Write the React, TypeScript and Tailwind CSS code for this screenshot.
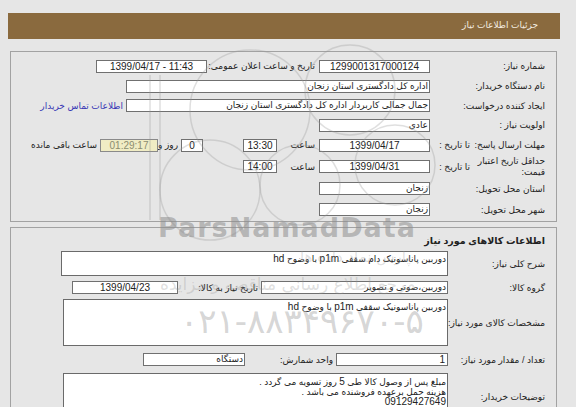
import React from "react";

const F = "font-['Liberation_Sans','DejaVu_Sans',sans-serif]";

function Inp({
  className,
  children,
  ltr,
}: {
  className: string;
  children?: React.ReactNode;
  ltr?: boolean;
}) {
  return (
    <div
      dir={ltr ? "ltr" : "rtl"}
      className={`h-[13px] shrink-0 border border-[#707070] bg-white leading-[11px] text-[#222] whitespace-nowrap overflow-hidden ${
        ltr ? "text-[10px]" : "text-[9px]"
      } ${className}`}
    >
      {children}
    </div>
  );
}

function Lbl({ className, children }: { className: string; children: React.ReactNode }) {
  return (
    <div className={`shrink-0 text-[9px] leading-[12px] text-[#222] whitespace-nowrap ${className}`}>
      {children}
    </div>
  );
}

export default function App() {
  return (
    <div
      dir="rtl"
      className={`relative w-[576px] h-[407px] overflow-hidden bg-[#e6e6e6] pt-[13px] pl-[8px] pr-[16px] ${F}`}
    >
      {/* header */}
      <div className="h-[26px] bg-[#8a6a3e] flex items-center pr-[22px]">
        <span className="text-[9px] text-[#f3ece0]">جزئیات اطلاعات نیاز</span>
      </div>

      {/* panel 1 */}
      <div className="mt-[12px] ml-[2px] mr-[3px] h-[171px] border border-[#a2a2a2] pt-[4px] pr-[9px]">
        {/* row 1 */}
        <div className="flex items-center h-[20px]">
          <Lbl className="w-[117px] pr-[2px]">شماره نیاز:</Lbl>
          <Inp className="w-[111px] text-center" ltr>
            1299001317000124
          </Inp>
          <Lbl className="w-[112px] pr-[4px]">تاریخ و ساعت اعلان عمومی:</Lbl>
          <Inp className="w-[111px] text-center" ltr>
            1399/04/17 - 11:43
          </Inp>
        </div>
        {/* row 2 */}
        <div className="flex items-center h-[20px]">
          <Lbl className="w-[117px] pr-[2px]">نام دستگاه خریدار:</Lbl>
          <Inp className="w-[304px] pr-[1px]">اداره کل دادگستری استان زنجان</Inp>
        </div>
        {/* row 3 */}
        <div className="flex items-center h-[19px]">
          <Lbl className="w-[117px] pr-[2px]">ایجاد کننده درخواست:</Lbl>
          <Inp className="w-[304px] pr-[1px]">جمال جمالی کاربردار اداره کل دادگستری استان زنجان</Inp>
          <div className="pr-[3px] text-[9px] leading-[12px] text-[#3737b5] whitespace-nowrap">
            اطلاعات تماس خریدار
          </div>
        </div>
        {/* row 4 */}
        <div className="flex items-center h-[20px]">
          <Lbl className="w-[117px] pr-[2px]">اولویت نیاز :</Lbl>
          <Inp className="w-[111px] pr-[1px]">عادي</Inp>
        </div>
        {/* row 5 */}
        <div className="flex items-center h-[20px]">
          <div className="w-[117px] shrink-0 flex items-center pr-[2px]">
            <Lbl className="w-[75px]">مهلت ارسال پاسخ:</Lbl>
            <Lbl className="">تا تاریخ :</Lbl>
          </div>
          <Inp className="w-[111px] text-center" ltr>
            1399/04/17
          </Inp>
          <Lbl className="w-[42px] pr-[4px]">ساعت</Lbl>
          <Inp className="w-[34px] text-center" ltr>
            13:30
          </Inp>
          <div className="w-[40px] shrink-0" />
          <Inp className="w-[22px] text-center" ltr>
            0
          </Inp>
          <Lbl className="w-[23px] pr-[3px]">روز و</Lbl>
          <div
            dir="ltr"
            className="h-[13px] w-[58px] shrink-0 border border-[#8a8a8a] bg-[#f0ecc4] text-[10px] leading-[11px] text-[#8c8c70] text-center"
          >
            01:29:17
          </div>
          <Lbl className="pr-[3px]">ساعت باقی مانده</Lbl>
        </div>
        {/* row 6 */}
        <div className="flex items-center h-[23px]">
          <div className="w-[117px] shrink-0 flex items-center pr-[2px]">
            <div className="w-[75px] shrink-0 text-[9px] leading-[11px] text-[#222] whitespace-nowrap">
              حداقل تاریخ اعتبار
              <br />
              قیمت:
            </div>
            <Lbl className="">تا تاریخ :</Lbl>
          </div>
          <Inp className="w-[111px] text-center" ltr>
            1399/04/31
          </Inp>
          <Lbl className="w-[42px] pr-[4px]">ساعت</Lbl>
          <Inp className="w-[34px] text-center" ltr>
            14:00
          </Inp>
        </div>
        {/* row 7 */}
        <div className="flex items-center h-[21px]">
          <Lbl className="w-[117px] pr-[2px]">استان محل تحویل:</Lbl>
          <Inp className="w-[111px] pr-[1px]">زنجان</Inp>
        </div>
        {/* row 8 */}
        <div className="flex items-center h-[21px]">
          <Lbl className="w-[117px] pr-[2px]">شهر محل تحویل:</Lbl>
          <Inp className="w-[111px] pr-[1px]">زنجان</Inp>
        </div>
      </div>

      {/* panel 2 */}
      <div className="mt-[5px] ml-[2px] mr-[3px] h-[200px] border border-[#a2a2a2] pt-[3px] pr-[9px]">
        <div className="h-[20px] flex items-center pr-[2px]">
          <span className="text-[9.5px] font-bold text-[#222]">اطلاعات کالاهای مورد نیاز</span>
        </div>
        <div className="flex items-center">
          <Lbl className="w-[99px] pr-[2px]">شرح کلی نیاز:</Lbl>
          <div className="h-[25px] w-[387px] shrink-0 border border-[#6a6a6a] bg-white text-[9px] leading-[12px] text-[#222] pr-[1px] pt-[1px]">
            دوربین پاناسونیک دام  سقفی <span className="text-[10px]">p1m</span> با وضوح <span className="text-[10px]">hd</span>
          </div>
        </div>
        <div className="flex items-center h-[23px]">
          <Lbl className="w-[99px] pr-[2px]">گروه کالا:</Lbl>
          <Inp className="w-[187px] pr-[1px]">دوربین،صوتی و تصویر</Inp>
          <Lbl className="w-[83px] pr-[3px]">تاریخ نیاز به کالا:</Lbl>
          <Inp className="w-[106px] text-center" ltr>
            1399/04/23
          </Inp>
        </div>
        <div className="flex items-center">
          <Lbl className="w-[99px] pr-[2px]">مشخصات کالای مورد نیاز:</Lbl>
          <div className="h-[47px] w-[385px] shrink-0 border border-[#6a6a6a] bg-white text-[9px] leading-[12px] text-[#222] pr-[1px] pt-[1px]">
            دوربین پاناسونیک سقفی <span className="text-[10px]">p1m</span> با وضوح <span className="text-[10px]">hd</span>
          </div>
        </div>
        <div className="flex items-center h-[27px]">
          <Lbl className="w-[99px] pr-[2px]">تعداد / مقدار مورد نیاز:</Lbl>
          <Inp className="w-[112px] pr-[2px] text-[10px]">1</Inp>
          <Lbl className="w-[91px] pr-[3px]">واحد شمارش:</Lbl>
          <Inp className="w-[102px] pr-[1px]">دستگاه</Inp>
        </div>
        <div className="flex items-center">
          <Lbl className="w-[99px] pr-[2px]">توضیحات خریدار:</Lbl>
          <div className="h-[48px] w-[385px] shrink-0 border border-[#6a6a6a] bg-white text-[9px] leading-[10px] text-[#222] pr-[1px] pt-[3px]">
            <div>
              مبلغ پس از وصول کالا طی <span className="text-[10px]">5</span> روز تسویه می گردد .
            </div>
            <div>هزینه حمل برعهده فروشنده می باشد .</div>
            <div className="text-[10px]">09129427649</div>
          </div>
        </div>
      </div>

      {/* watermark */}
      <div className="pointer-events-none absolute inset-0">
        <svg className="absolute left-0 top-0" width="576" height="407" viewBox="0 0 576 407">
          <g fill="none" stroke="rgba(150,150,150,0.3)" strokeWidth="1.5">
            <path d="M150 75 L150 220" />
            <path d="M160 75 L160 220" />
            <circle cx="250" cy="110" r="60" />
            <circle cx="350" cy="90" r="45" />
            <circle cx="210" cy="190" r="50" />
            <circle cx="300" cy="185" r="40" />
            <circle cx="395" cy="165" r="40" />
          </g>
        </svg>
        <div
          dir="ltr"
          className="absolute left-[158px] top-[208px] text-[27px] font-bold tracking-[1px] font-['DejaVu_Sans',sans-serif] text-[rgba(140,140,140,0.55)]"
        >
          ParsNamadData
        </div>
        <div className="absolute left-[300px] top-[246px] text-[15px] font-['DejaVu_Sans',sans-serif] text-[rgba(150,150,150,0.3)]">
          پارس نماد داده ها
        </div>
        <div className="absolute left-[160px] top-[272px] text-[17px] font-['DejaVu_Sans',sans-serif] text-[rgba(150,150,150,0.3)]">
          مرجع اطلاع رسانی مناقصه و مزایده
        </div>
        <div
          dir="ltr"
          className="absolute left-[180px] top-[296px] text-[34px] font-['DejaVu_Sans',sans-serif] text-[rgba(150,150,150,0.4)]"
        >
          ۰۲۱-۸۸۳۴۹۶۷۰-۵
        </div>
      </div>
    </div>
  );
}
